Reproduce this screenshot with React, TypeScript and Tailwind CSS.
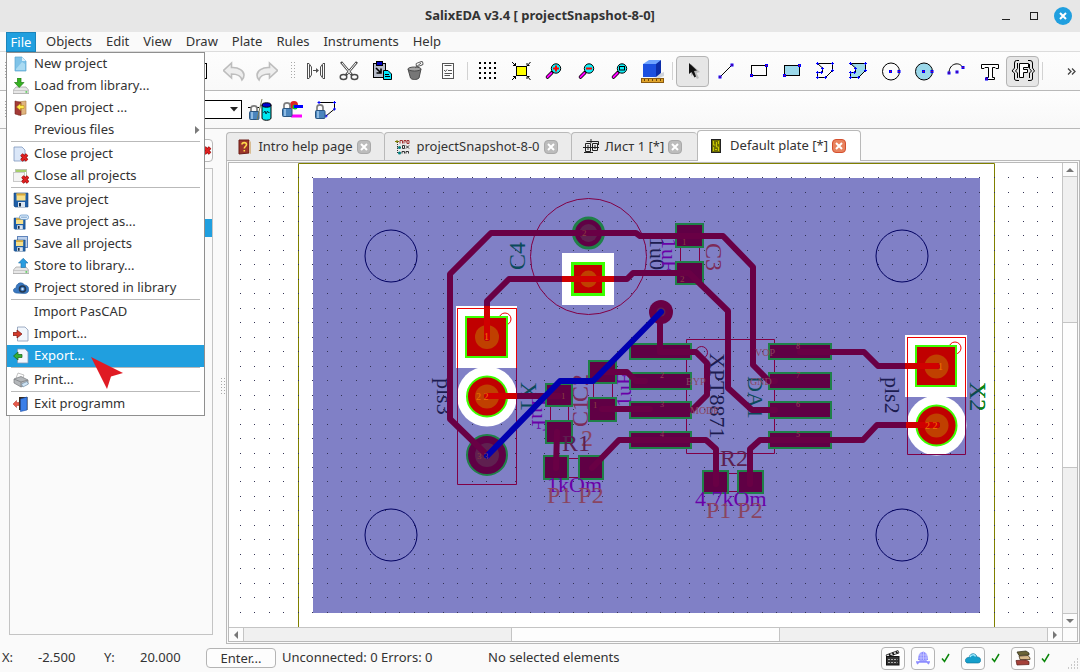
import { ReactNode } from 'react';

const MENUS = ['Objects', 'Edit', 'View', 'Draw', 'Plate', 'Rules', 'Instruments', 'Help'];

const Svg = ({ size = 16, children }: { size?: number; children?: ReactNode }) => (
  <svg width={size} height={size} viewBox={`0 0 ${size} ${size}`} className="shrink-0" aria-hidden="true">
    {children}
  </svg>
);

/* ---------- File menu icons (16 x 16) ---------- */

const RedCross = ({ x = 7, y = 7 }: { x?: number; y?: number }) => (
  <g transform={`translate(${x} ${y})`}>
    <path d="M1.5 1.5 L7 7.5 M7 1.5 L1.5 7.5" stroke="#8a0f0f" strokeWidth="3.4" />
    <path d="M1.5 1.5 L7 7.5 M7 1.5 L1.5 7.5" stroke="#e02020" strokeWidth="2.2" />
  </g>
);

const Floppy = ({ x = 1, y = 1, s = 1 }: { x?: number; y?: number; s?: number }) => (
  <g transform={`translate(${x} ${y}) scale(${s})`}>
    <path d="M0 0 H14 V14 H1 L0 13Z" fill="#1f5fa8" stroke="#174577" strokeWidth=".6" />
    <rect x="2.5" y="0.5" width="9" height="7" fill="#f7e08a" />
    <rect x="2.5" y="0.5" width="9" height="2" fill="#d9a93a" />
    <rect x="4" y="9" width="7" height="5" fill="#d9e4ef" />
    <rect x="5" y="10" width="2" height="3.5" fill="#1b2c44" />
  </g>
);

const Drive = () => (
  <>
    <path d="M3 9 L13 9 L16 12.5 V15.5 H0 V12.5Z" fill="#e7e7e7" stroke="#8d8d8d" strokeWidth=".6" />
    <path d="M0 12.5 H16" stroke="#b5b5b5" strokeWidth=".6" />
    <rect x="12.5" y="13.3" width="1.8" height="1.3" fill="#35c435" />
  </>
);

const Sheet = () => <path d="M4.5 1 H12 L15 4 V15 H4.5Z" fill="#f1f6fc" stroke="#8899b5" strokeWidth=".8" />;

const NewIcon = () => (
  <Svg>
    <path d="M2 1 H9 L13 5 V15 H2Z" fill="#7fc3e8" stroke="#5aa5cf" strokeWidth=".7" />
    <path d="M9 1 V5 H13Z" fill="#d9effa" />
    <path d="M3 13 L9 6 L12 8 V14 H3Z" fill="#a9daf2" />
  </Svg>
);
const LoadIcon = () => (
  <Svg>
    <Drive />
    <path d="M4.5 0 H8 V4.5 H11 L6.2 9.5 L1.5 4.5 H4.5Z" fill="#35b321" stroke="#1f7a12" strokeWidth=".7" />
  </Svg>
);
const OpenIcon = () => (
  <Svg>
    <path d="M5 2 L13 1 V14 L5 15Z" fill="#e0b47e" stroke="#a87a43" strokeWidth=".6" />
    <path d="M2 1 L8 2.5 V15.5 L2 14Z" fill="#a33b37" stroke="#74211f" strokeWidth=".6" />
    <path d="M3.5 7 L7.5 3.5 V5.5 H11 V8.5 H7.5 V10.5Z" fill="#ffe94a" stroke="#b08a10" strokeWidth=".5" />
  </Svg>
);
const CloseIcon = () => (
  <Svg>
    <path d="M1 1 H9 L12 4 V15 H1Z" fill="#dbe7f8" stroke="#7f97bd" strokeWidth=".8" />
    <RedCross />
  </Svg>
);
const CloseAllIcon = () => (
  <Svg>
    <rect x="2.5" y="1.5" width="11" height="9" fill="#fff" stroke="#b9c4b0" />
    <rect x=".5" y="4.5" width="11" height="9" fill="#f4f4f4" stroke="#c9c9c9" />
    <rect x="3" y="2" width="10" height="2" fill="#a7cf6a" />
    <RedCross x={8} y={7} />
  </Svg>
);
const SaveIcon = () => (
  <Svg>
    <Floppy />
  </Svg>
);
const SaveAsIcon = () => (
  <Svg>
    <Floppy x={1} y={4} s={0.8} />
    <rect x="6.5" y="1" width="9" height="4.5" rx="2" fill="#d9eafa" stroke="#5b8fc6" strokeWidth=".7" />
    <path d="M8.5 3.2 H14" stroke="#2d62a0" strokeDasharray="1 1" />
  </Svg>
);
const SaveAllIcon = () => (
  <Svg>
    <rect x="4.5" y=".5" width="10" height="11" fill="#bcd0ec" stroke="#5f84bb" />
    <Floppy x={1} y={4} s={0.8} />
  </Svg>
);
const StoreIcon = () => (
  <Svg>
    <Drive />
    <path d="M8 9.5 V5 H5.5 L10.2 .3 L15 5 H12.5 V9.5Z" fill="#2a9de0" stroke="#1b6fa8" strokeWidth=".6" />
  </Svg>
);
const CloudIcon = () => (
  <Svg>
    <path d="M3 13 C-1 12 0 8 3 8 C3 3 9 1 11.5 5 C15 5 17 9 15 12 C14 13.5 12 13.5 11 13.5Z" fill="#3a78c0" stroke="#245a99" strokeWidth=".6" />
    <circle cx="9.5" cy="9" r="3" fill="none" stroke="#24384f" strokeWidth="1.6" />
    <circle cx="9.5" cy="9" r="1.2" fill="#cfe2f5" />
  </Svg>
);
const ImportIcon = () => (
  <Svg>
    <Sheet />
    <path d="M0 6.5 H4 V4 L9 8 L4 12 V9.5 H0Z" fill="#d23a2a" stroke="#7d1710" strokeWidth=".7" />
  </Svg>
);
const ExportIcon = () => (
  <Svg>
    <Sheet />
    <path d="M9 6.5 H5 V4 L.5 8 L5 12 V9.5 H9Z" fill="#35b035" stroke="#176017" strokeWidth=".7" />
  </Svg>
);
const PrintIcon = () => (
  <Svg>
    <path d="M5 1 L11 3 L9 8 L3 6Z" fill="#fdfdfd" stroke="#9a9a9a" strokeWidth=".6" />
    <path d="M1 7 L8 4.5 L15 8 V12 L8 15 L1 11Z" fill="#b4b7ba" stroke="#75797d" strokeWidth=".7" />
    <path d="M1 7 L8 10 L15 8 M8 10 V15" fill="none" stroke="#75797d" strokeWidth=".7" />
    <path d="M8.5 12 L14 9.5 L15.5 12 L10 15Z" fill="#cfe4f5" stroke="#6e8ba3" strokeWidth=".6" />
  </Svg>
);
const ExitIcon = () => (
  <Svg>
    <path d="M6 1 H14.5 V14 H6Z" fill="#3a2a1c" />
    <path d="M7.5 3 L14 1 V14 L7.5 15.5Z" fill="#3b7fe8" stroke="#1a4aa0" strokeWidth=".6" />
    <path d="M6 6.5 H3.5 V4.5 L0 8 L3.5 11.5 V9.5 H6Z" fill="#e85a4a" stroke="#b03024" strokeWidth=".5" />
  </Svg>
);

interface MenuEntry {
  label: string;
  icon?: ReactNode;
  arrow?: boolean;
  active?: boolean;
  line?: boolean;
}

const FILE_MENU: MenuEntry[] = [
  { label: 'New project', icon: <NewIcon /> },
  { label: 'Load from library...', icon: <LoadIcon /> },
  { label: 'Open project ...', icon: <OpenIcon /> },
  { label: 'Previous files', arrow: true, line: true },
  { label: 'Close project', icon: <CloseIcon /> },
  { label: 'Close all projects', icon: <CloseAllIcon />, line: true },
  { label: 'Save project', icon: <SaveIcon /> },
  { label: 'Save project as...', icon: <SaveAsIcon /> },
  { label: 'Save all projects', icon: <SaveAllIcon /> },
  { label: 'Store to library...', icon: <StoreIcon /> },
  { label: 'Project stored in library', icon: <CloudIcon />, line: true },
  { label: 'Import PasCAD' },
  { label: 'Import...', icon: <ImportIcon /> },
  { label: 'Export...', icon: <ExportIcon />, active: true, line: true },
  { label: 'Print...', icon: <PrintIcon />, line: true },
  { label: 'Exit programm', icon: <ExitIcon /> },
];

const FileMenu = () => (
  <div role="menu" className="absolute left-0 top-5 z-20 w-[199px] border border-[#8f8f8f] bg-white">
    {FILE_MENU.map(item => (
      <div key={item.label}>
        <button
          role="menuitem"
          className={
            item.active
              ? 'flex h-[22px] w-full items-center gap-[5px] bg-[#209fdf] pl-1.5 pr-1 text-left text-white'
              : 'flex h-[22px] w-full items-center gap-[5px] pl-1.5 pr-1 text-left'
          }>
          <span className="size-4 shrink-0">{item.icon}</span>
          <span className="flex-1 whitespace-nowrap">{item.label}</span>
          {item.arrow && (
            <svg width="5" height="8" viewBox="0 0 5 8">
              <path d="M0 0 L4.5 4 L0 8Z" fill="#7a7a7a" />
            </svg>
          )}
        </button>
        {item.line && <div className="mx-1 mb-px h-px bg-[#b9b9b9]" />}
      </div>
    ))}
    {/* pointer marker */}
    <svg width="34" height="34" viewBox="0 0 34 34" className="absolute left-[84px] top-[304px]">
      <path d="M0 0 L32 16 L20 19.5 L16 32Z" fill="#e01b24" />
    </svg>
  </div>
);

/* ---------- Toolbar icons (22 x 22) ---------- */

const Node = ({ x, y }: { x: number; y: number }) => (
  <>
    <rect x={x - 1.5} y={y - 1.5} width="3" height="3" fill="#0000ff" />
    <rect x={x - 0.5} y={y - 0.5} width="1" height="1" fill="#ff0000" />
  </>
);

const Plus = ({ x, y }: { x: number; y: number }) => (
  <path d={`M${x - 1.5} ${y} h3 M${x} ${y - 1.5} v3`} stroke="#0000ff" />
);

const ARROW_BACK = 'M.5 10.5 L8.5 3 V7.5 C16 7 21 11 21 15 C21 17 20 19 19 20 C18 16 14 14 8.5 14 V18Z';

const UndoIcon = () => (
  <Svg size={22}>
    <path d={ARROW_BACK} fill="#ededed" stroke="#bdbdbd" strokeWidth="1.6" />
  </Svg>
);
const RedoIcon = () => (
  <Svg size={22}>
    <path d={ARROW_BACK} transform="translate(22 0) scale(-1 1)" fill="#ededed" stroke="#bdbdbd" strokeWidth="1.6" />
  </Svg>
);
const MirrorIcon = () => (
  <Svg size={22}>
    <path
      d="M2.5 3 V19 M2.5 3.5 H4 L6.5 7 V15 L4 18.5 H2.5 M4.5 5 V17 M19.5 3 V19 M19.5 3.5 H18 L15.5 7 V15 L18 18.5 H19.5 M17.5 5 V17"
      fill="none"
      stroke="#505050"
    />
    <path d="M8 10.5 H12" stroke="#505050" />
    <path d="M11 8 L14 10.5 L11 13Z" fill="#505050" />
  </Svg>
);
const CutIcon = () => (
  <Svg size={22}>
    <path d="M3 2 L14 15 M19 2 L8 15" stroke="#4a4a4a" strokeWidth="2.6" />
    <path d="M4 3 L13 14 M18 3 L9 14" stroke="#fff" />
    <ellipse cx="5.5" cy="17" rx="3.3" ry="2.5" fill="none" stroke="#4a4a4a" strokeWidth="1.4" />
    <ellipse cx="16.5" cy="17" rx="3.3" ry="2.5" fill="none" stroke="#4a4a4a" strokeWidth="1.4" />
  </Svg>
);
const PasteIcon = () => (
  <Svg size={22}>
    <rect x="2.5" y="3.5" width="12" height="14" fill="#b7bcc9" stroke="#000" />
    <rect x="5.5" y="1.5" width="6" height="4" fill="#0000c0" stroke="#000" />
    <path d="M5 8 L10 13 M10 8.5 V13 H5.5" fill="none" stroke="#000" strokeWidth="1.6" />
    <path d="M12.5 10.5 H17 L20.5 14 V19.5 H12.5Z" fill="#00e8ff" stroke="#000" />
    <path d="M14 14.5 H18 M14 16.5 H19" stroke="#000" />
  </Svg>
);
const BucketIcon = () => (
  <Svg size={22}>
    <path d="M4 9 H17 L15 18 C13 20 8 20 6.5 18Z" fill="#777" stroke="#4b4b4b" />
    <ellipse cx="10.5" cy="9" rx="6.5" ry="2" fill="#a4a4a4" stroke="#4b4b4b" />
    <rect x="12" y="2.5" width="7" height="3.5" rx="1.5" fill="none" stroke="#5a5a5a" transform="rotate(-20 15 4)" />
    <path d="M11 8 L17 3" stroke="#5a5a5a" />
  </Svg>
);
const ListIcon = () => (
  <Svg size={22}>
    <rect x="5.5" y="3.5" width="11" height="15" fill="#fdfdfd" stroke="#555" />
    <path d="M7.5 5.5 H14.5 M7 10 L8.5 11.5 L10 9.5 M11 10.5 H15 M7.5 13.5 H15 M7.5 15.5 H13" fill="none" stroke="#555" />
  </Svg>
);
const GridIcon = () => (
  <Svg size={22}>
    {[3, 8, 13, 18].map(y => [3, 8, 13, 18].map(x => <rect key={`${x}-${y}`} x={x - 1} y={y - 1} width="2" height="2" fill="#000" />))}
  </Svg>
);
const FitIcon = () => (
  <Svg size={22}>
    <rect x="6.5" y="6.5" width="10" height="9" fill="#ffff00" stroke="#000" />
    <path
      d="M2 2 L6 6 M20.5 2 L17 6 M2 20 L6 16 M20.5 20 L17 16 M3 5.5 H5.5 V3 M19.5 5.5 H17 V3 M3 16.5 H5.5 V19 M19.5 16.5 H17 V19"
      fill="none"
      stroke="#000"
    />
  </Svg>
);
const Lens = ({ children }: { children: ReactNode }) => (
  <Svg size={22}>
    <path d="M4.5 17 L9 12.5" stroke="#000" strokeWidth="3.6" strokeLinecap="round" />
    <path d="M4.5 17 L8.5 13" stroke="#ff00ff" strokeWidth="2" strokeLinecap="round" />
    <circle cx="13" cy="8.5" r="4.7" fill="#10f0f8" stroke="#000" />
    {children}
  </Svg>
);
const CubeIcon = () => (
  <Svg size={24}>
    <path d="M12 18 L23 13 V17 L18 19Z" fill="#cfd3da" />
    <path d="M2 5 L8 1 H20 L17 5Z" fill="#6fa4ff" />
    <path d="M2 5 H15 V18 H2Z" fill="#1c50e0" />
    <path d="M15 5 L20 1 V14 L15 18Z" fill="#0c2da8" />
    <rect x=".5" y="19.5" width="22" height="4" fill="#e0a42a" stroke="#8a5a10" />
    <path d="M3.5 20 v2 M7.5 20 v2 M11.5 20 v2 M15.5 20 v2 M19.5 20 v2" stroke="#6b4408" />
  </Svg>
);
const PointerIcon = () => (
  <Svg size={22}>
    <path d="M9 4 V16 L12 14 L15 19 L17 18 L14.5 13 L18 12Z" fill="#b9b9b9" />
    <path d="M7 3 V14 L9.5 12 L12.5 17.5 L14 16.5 L12 11 L15 10.5Z" fill="#111" />
  </Svg>
);
const LineIcon = () => (
  <Svg size={22}>
    <path d="M5 17 L17 5" stroke="#000" />
    <Node x={5} y={17} />
    <Node x={17} y={5} />
  </Svg>
);
const RectIcon = ({ fill = 'none' }: { fill?: string }) => (
  <Svg size={22}>
    <rect x="3.5" y="5.5" width="15" height="10" fill={fill} stroke="#000" />
    <Node x={3.5} y={15.5} />
    <Node x={18.5} y={5.5} />
  </Svg>
);
const PolyIcon = ({ fill = 'none' }: { fill?: string }) => (
  <Svg size={22}>
    <path d="M3.5 3.5 H18.5 V10.5 L11.5 17.5 H3.5 V12.5 H8.5 V8 L3.5 3.5Z" fill={fill} stroke="#000" />
    {[
      [3.5, 3.5],
      [18.5, 3.5],
      [18.5, 10.5],
      [11.5, 17.5],
      [3.5, 17.5],
      [3.5, 12.5],
      [7.5, 12.5],
      [8.5, 8.5],
    ].map(([x, y]) => (
      <Plus key={`${x}-${y}`} x={x} y={y} />
    ))}
  </Svg>
);
const CircleIcon = ({ fill = 'none' }: { fill?: string }) => (
  <Svg size={22}>
    <circle cx="11" cy="11.5" r="8.5" fill={fill} stroke="#000" />
    <Node x={10.5} y={11.5} />
    <Node x={19} y={11.5} />
  </Svg>
);
const ArcIcon = () => (
  <Svg size={22}>
    <path d="M3 13 C3 3 14 1 17 8" fill="none" stroke="#000" />
    <Node x={3} y={13} />
    <Node x={11} y={12} />
    <Node x={17} y={7.5} />
  </Svg>
);
const TextIcon = () => (
  <Svg size={22}>
    <path d="M2.5 4.5 H19.5 V8.5 H17 L16 7.5 H13.5 V17.5 H15.5 V19.5 H7 V17.5 H9.5 V7.5 H6 L5 8.5 H2.5Z" fill="#fff" stroke="#000" />
    <Node x={7.5} y={19} />
  </Svg>
);
const FragmentIcon = () => (
  <Svg size={24}>
    <path d="M8.5 4.5 H17.5 V8.5 H12.5 V10.5 H16.5 V13.5 H12.5 V18.5 H8.5Z" fill="#fff" stroke="#000" />
    <path d="M8 1.5 H5.5 Q3.5 1.5 3.5 4 V9 L1 12 L3.5 14 V20 Q3.5 21.5 6 21.5 H8 M6.5 4 V9.5 L4.5 12 L6.5 14 V19" fill="none" stroke="#000" />
    <path d="M17 1.5 H19 Q21.5 1.5 21.5 4 V9 L23.5 12 L21.5 14 V20 Q21.5 21.5 19 21.5 H17 M18.5 5 V9.5 L20.5 12 L18.5 14 V19" fill="none" stroke="#000" />
  </Svg>
);

const Lock = ({ x, y }: { x: number; y: number }) => (
  <g transform={`translate(${x} ${y})`}>
    <path d="M2 7 V3.5 C2 0 8 0 8 3.5 V7" fill="none" stroke="#7d7d7d" strokeWidth="1.7" />
    <rect x=".5" y="6.5" width="9.5" height="8" rx="1" fill="#4a85bd" stroke="#2a5580" />
    <rect x="2" y="7" width="2" height="7" fill="#8fbbe2" />
  </g>
);

const Grip = () => (
  <svg width="4" height="18" viewBox="0 0 4 18" className="shrink-0" aria-hidden="true">
    {[0, 3, 6, 9, 12, 15].map(y => (
      <path key={y} d={`M0 ${y + 0.5} h1 M3 ${y + 0.5} h1`} stroke="#a8a8a8" />
    ))}
  </svg>
);

const Tool = ({ label, pressed, children }: { label: string; pressed?: boolean; children: ReactNode }) => (
  <button
    aria-label={label}
    className={
      pressed
        ? 'flex h-[31px] w-[33px] shrink-0 items-center justify-center rounded-sm border border-[#b4b4b4] bg-[#e6e6e6]'
        : 'flex h-[31px] w-[33px] shrink-0 items-center justify-center'
    }>
    {children}
  </button>
);

const Divider = () => <div className="mx-[3px] h-[18px] w-px shrink-0 bg-[#d2d2d2]" />;

const Toolbars = () => (
  <>
    <div className="flex h-[39px] items-center overflow-hidden border-b border-[#b9b9b9] bg-gradient-to-b from-[#fdfdfd] to-[#f9f9f9] pl-[5px]">
      <Grip />
      <div className="w-[198px] shrink-0">
        <div className="h-4 border border-black bg-white" />
      </div>
      <div className="flex shrink-0 items-center pl-[10px]">
        <Tool label="Undo"><UndoIcon /></Tool>
        <Tool label="Redo"><RedoIcon /></Tool>
      </div>
      <div className="pl-2 pr-1"><Grip /></div>
      <Tool label="Mirror"><MirrorIcon /></Tool>
      <Tool label="Cut"><CutIcon /></Tool>
      <Tool label="Paste"><PasteIcon /></Tool>
      <Tool label="Delete"><BucketIcon /></Tool>
      <Tool label="Properties"><ListIcon /></Tool>
      <Divider />
      <Tool label="Grid"><GridIcon /></Tool>
      <Tool label="Fit"><FitIcon /></Tool>
      <Tool label="Zoom in">
        <Lens><path d="M10 8.5 H16 M13 5.5 V11.5" stroke="#f00" strokeWidth="2" /></Lens>
      </Tool>
      <Tool label="Zoom out">
        <Lens><path d="M10 8.5 H16" stroke="#f00" strokeWidth="2" /></Lens>
      </Tool>
      <Tool label="Zoom window">
        <Lens><rect x="10.5" y="6.5" width="5" height="3.5" fill="none" stroke="#000" /></Lens>
      </Tool>
      <Tool label="3D view"><CubeIcon /></Tool>
      <Divider />
      <Tool label="Select" pressed><PointerIcon /></Tool>
      <Tool label="Line"><LineIcon /></Tool>
      <Tool label="Rectangle"><RectIcon /></Tool>
      <Tool label="Filled rectangle"><RectIcon fill="#9bd8ea" /></Tool>
      <Tool label="Polygon"><PolyIcon /></Tool>
      <Tool label="Filled polygon"><PolyIcon fill="#9bd8ea" /></Tool>
      <Tool label="Circle"><CircleIcon /></Tool>
      <Tool label="Filled circle"><CircleIcon fill="#9bd8ea" /></Tool>
      <Tool label="Arc"><ArcIcon /></Tool>
      <Tool label="Text"><TextIcon /></Tool>
      <Tool label="Fragment" pressed><FragmentIcon /></Tool>
      <Divider />
      <button aria-label="More" className="ml-auto shrink-0 pr-1">
        <svg width="9" height="7" viewBox="0 0 9 7">
          <path d="M1 .5 L4 3.5 L1 6.5 M5 .5 L8 3.5 L5 6.5" fill="none" stroke="#444" strokeWidth="1.3" />
        </svg>
      </button>
    </div>
    <div className="flex h-[38px] items-center border-b border-[#b9b9b9] bg-gradient-to-b from-[#fefefe] to-[#f8f8f8] pl-[5px]">
      <Grip />
      <div className="ml-2 flex h-[19px] w-[225px] justify-end border border-black bg-white">
        <button aria-label="Layer" className="flex w-[15px] items-center justify-center">
          <svg width="8" height="5" viewBox="0 0 8 5">
            <path d="M0 0 H8 L4 4.5Z" fill="#222" />
          </svg>
        </button>
      </div>
      <div className="ml-px flex">
        <Tool label="Lock pins">
          <Svg size={24}>
            <path d="M0 9.5 H3 M8 9.5 H11" stroke="#000" />
            <Lock x={1} y={7} />
            <path d="M9 22 L14 1" stroke="#7a7a50" />
            <path d="M14 7 V20 C14 23 23 23 23 20 V7Z" fill="#00e8f0" stroke="#000" />
            <ellipse cx="18.5" cy="7" rx="4.5" ry="2.2" fill="#0000d0" stroke="#000" />
            <path d="M15.5 15 l1.5 -2 l1 3 l1.5 -3 l1 2 l1 -1" fill="none" stroke="#034" />
          </Svg>
        </Tool>
        <Tool label="Lock tracks">
          <Svg size={24}>
            <circle cx="13" cy="7" r="4" fill="#e02020" />
            <circle cx="14" cy="9" r="2.5" fill="#00d020" />
            <path d="M13 8.5 H22" stroke="#0000ff" strokeWidth="3" />
            <path d="M10 18 H21" stroke="#ff00ff" strokeWidth="3" />
            <Lock x={1} y={4} />
          </Svg>
        </Tool>
        <Tool label="Lock polygon">
          <Svg size={24}>
            <path d="M5 4.5 H20.5 V11 L12 18" fill="none" stroke="#000" />
            <Plus x={5} y={4.5} />
            <Plus x={20.5} y={4.5} />
            <Plus x={20.5} y={11} />
            <Plus x={12} y={18} />
            <Lock x={1} y={6} />
          </Svg>
        </Tool>
      </div>
    </div>
  </>
);

/* ---------- Tabs ---------- */

interface TabProps {
  label: string;
  icon: ReactNode;
  width: string;
  active?: boolean;
}

const TABS: TabProps[] = [
  {
    label: 'Intro help page',
    width: 'w-[158px]',
    icon: (
      <Svg>
        <path d="M3 1 H13 V14 L3 15Z" fill="#9c352b" stroke="#6b1c16" />
        <path d="M13 1 L15 3 V15 L13 14Z" fill="#d9bd93" />
        <path d="M6 5.5 C6 3 10.5 3 10.5 5.5 C10.5 7.5 8.3 7.5 8.3 9.5 M8.3 11 V12.5" fill="none" stroke="#ffd94a" strokeWidth="1.6" />
      </Svg>
    ),
  },
  {
    label: 'projectSnapshot-8-0',
    width: 'w-[187px]',
    icon: (
      <Svg>
        <path d="M3.5 3 V14 H7 M3.5 8.5 H7" fill="none" stroke="#333" strokeDasharray="1 1" />
        <path d="M1 2.5 H5 M3 1 V4" stroke="#7a7a00" />
        <path d="M6 4.5 V1.5 H8.5 V4.5 M10 1.5 V4.5 M10 1.5 H12 V3.5 M13 1.5 H15 V4.5 H13Z" fill="none" stroke="#a03030" />
        <circle cx="5.5" cy="8.5" r="1.5" fill="#008080" />
        <circle cx="5.5" cy="14" r="1.5" fill="#008080" />
        <path d="M8.5 6.5 H10.5 V9.5 H8.5Z M12 6.5 L15 9.5 M15 6.5 L12 9.5 M8 14.5 V12.5 H10.5 V14.5 M12 14.5 V12.5 H14.5 V14.5" fill="none" stroke="#333" />
      </Svg>
    ),
  },
  {
    label: 'Лист 1 [*]',
    width: 'w-[126px]',
    icon: (
      <Svg>
        <path d="M0 8.5 H16 M2.5 4.5 H7.5 V12.5 H2.5Z M9.5 4.5 H14.5 V11.5 H9.5Z M3.5 2.5 H15.5 V6 M8 0 V4 M1 13.5 H10 M5 6 V11 M12 6 V10" fill="none" stroke="#222" />
      </Svg>
    ),
  },
  {
    label: 'Default plate [*]',
    width: 'w-[164px]',
    active: true,
    icon: (
      <Svg>
        <rect x="3.5" y="1.5" width="9" height="13" fill="#6e6e00" stroke="#222" />
        <path d="M5.5 3 V7 H7.5 M10.5 3 V6 M8.5 4 V9 H10.5 V13 M5.5 9 V13 M7 11.5 H9" fill="none" stroke="#c8c800" />
      </Svg>
    ),
  },
];

const Tab = ({ label, icon, width, active }: TabProps) => (
  <div
    role="tab"
    aria-selected={!!active}
    className={`${width} ${
      active ? 'relative z-10 -mb-px h-[31px] border bg-white' : 'h-7 border border-r-0 bg-[#ebebeb]'
    } flex shrink-0 items-center justify-center gap-1 rounded-t-sm border-b-0 border-[#b9b9b9] pr-1`}>
    {icon}
    <span className="whitespace-nowrap pl-0.5">{label}</span>
    <button
      aria-label={`Close ${label}`}
      className={
        active
          ? 'flex size-[14px] items-center justify-center rounded-sm border border-[#d5502f] bg-[#e8835f]'
          : 'flex size-[14px] items-center justify-center rounded-sm border border-[#a9a9a9] bg-[#bcbcbc]'
      }>
      <svg width="8" height="8" viewBox="0 0 8 8">
        <path d="M1 1 L7 7 M7 1 L1 7" stroke="#fff" strokeWidth="2" />
      </svg>
    </button>
  </div>
);

/* ---------- Plate ---------- */

const PLATE = '#8080c6';
const COPPER = '#690045';
const RED = '#c00000';
const LIME = '#3cff00';
const GREEN = '#1f8048';

const gridPath = () => {
  let d = '';
  for (let i = 0; i < 57; i++) {
    for (let j = 0; j < 31; j++) {
      d += `M${Math.floor(240.3 + i * 14.5)} ${Math.floor(177.9 + j * 14.48)}h1v1h-1z`;
    }
  }
  return d;
};

// left, top, width, height of rectangular pads
const PADS = [
  [675, 223, 29, 25],
  [675, 261, 29, 24],
  [545, 383, 28, 24],
  [545, 420, 28, 24],
  [588, 360, 29, 24],
  [588, 397, 29, 25],
  [543, 455, 26, 25],
  [578, 455, 26, 25],
  [702, 470, 27, 24],
  [737, 470, 27, 24],
  [629, 343, 63, 17],
  [629, 372, 63, 18],
  [629, 401, 63, 18],
  [629, 431, 63, 18],
  [768, 343, 64, 17],
  [768, 372, 64, 18],
  [768, 401, 64, 18],
  [768, 431, 64, 18],
];

const TRACKS = [
  'M487 455 L450 419 V274 L491 233 H636 L640 236 H723 L753 267 V365 L769 381 H775',
  'M487 338 V301 L509 279 H627 L633 273 H689 L728 311 V388 L752 410 H775',
  'M487 396 H559',
  'M557 432 L556 468',
  'M592 468 L619 440 H706 L716 449 V484',
  'M750 484 V449 L760 440 H863 L877 425 H937',
  'M800 352 H864 L878 366 H937',
  'M602 372 H627 L636 381 H645',
  'M602 409 H650',
  'M660 312 V352 H696 L707 363 V395 L692 410',
];

const RoundPad = ({ x, y, hot }: { x: number; y: number; hot?: boolean }) => (
  <>
    <circle cx={x} cy={y} r="20" fill={hot ? RED : '#5f0045'} stroke={hot ? LIME : GREEN} strokeWidth="2" />
    <circle cx={x} cy={y} r="12" fill={hot ? '#c04000' : '#5f2050'} />
  </>
);

interface MarkProps {
  x: number;
  y: number;
  turn?: number;
  size?: number;
  fill: string;
  children: string;
}

const Mark = ({ x, y, turn = 0, size = 24, fill, children }: MarkProps) => (
  <text transform={`translate(${x} ${y}) rotate(${turn})`} fontSize={size} fill={fill}>
    {children}
  </text>
);

const Plate = () => (
  <svg
    viewBox="229 163 833 464"
    preserveAspectRatio="xMidYMid slice"
    className="h-full w-full bg-white font-['Liberation_Serif']">
    <defs>
      <clipPath id="hot">
        <path d="M562 253 H614 V305 H562Z M456 306 H517 V368 H456Z M905 335 H967 V397 H905Z M456 368 H517 V427 H456Z M906 397 H967 V455 H906Z" />
      </clipPath>
      <clipPath id="margin">
        <rect x="980" y="163" width="82" height="464" />
      </clipPath>
    </defs>
    <rect x="313" y="178" width="667" height="435" fill={PLATE} />
    <path d="M298.5 640 V163.5 H994.5 V640" fill="none" stroke="#808000" />
    <path d={gridPath()} fill="#333355" shapeRendering="crispEdges" />
    <g fill="none" stroke="#000060">
      <circle cx="391" cy="256" r="26" />
      <circle cx="902" cy="256" r="26" />
      <circle cx="391" cy="535" r="26" />
      <circle cx="902" cy="535" r="26" />
    </g>

    {/* clearances of the selected net */}
    <g fill="#fff">
      <rect x="562" y="253" width="52" height="52" />
      <rect x="456" y="306" width="61" height="62" />
      <rect x="905" y="335" width="62" height="62" />
      <circle cx="487" cy="396.5" r="30" />
      <circle cx="936.5" cy="425.5" r="30" />
    </g>

    {/* silk */}
    <g fill="none" stroke="#800045">
      <circle cx="588.5" cy="256.5" r="58" />
      <path d="M457.5 308.5 H516.5 V484.5 H457.5Z M907.5 337.5 H965.5 V454.5 H907.5Z M686.5 339.5 H774.5 V453.5 H686.5Z" />
      <path d="M680.5 248 V261 M699.5 248 V261 M550.5 407 V420 M568.5 407 V420 M593.5 384 V397 M612.5 384 V397 M569 458.5 H578 M569 477.5 H578 M729 473.5 H737 M729 491.5 H737" />
      <circle cx="701.5" cy="352.5" r="6" />
    </g>
    <g fill="none" stroke="#f00000">
      <path d="M457.5 368 V308.5 H516.5 V368 M907.5 397 V337.5 H965.5 V397" />
      <circle cx="505" cy="319" r="6" />
      <circle cx="955" cy="348" r="6" />
    </g>

    {/* lettering */}
    <Mark x={525} y={270} turn={-90} fill="#0b4a5a">C4</Mark>
    <Mark x={437} y={378} turn={90} size={22} fill="#1c1c50">pls3</Mark>
    <Mark x={521} y={382} turn={90} fill="#0b4a5a">X1</Mark>
    <Mark x={650} y={237} turn={90} size={22} fill="#1c1c50">1u0</Mark>
    <Mark x={662} y={238} turn={90} size={22} fill="#6a00a8">1uF</Mark>
    <Mark x={706} y={243} turn={90} fill="#7d2b58">C3</Mark>
    <Mark x={532} y={397} turn={90} size={22} fill="#6a00a8">1uF</Mark>
    <Mark x={631} y={407} turn={-90} size={22} fill="#6a00a8">1uF</Mark>
    <Mark x={588} y={402} turn={-90} fill="#7d2b58">C2</Mark>
    <Mark x={588} y={427} turn={-90} fill="#7d2b58">C1</Mark>
    <Mark x={581} y={446} fill="#8a4560">2</Mark>
    <Mark x={710} y={353} turn={90} size={22} fill="#1c1c50">XPT8871</Mark>
    <Mark x={748} y={376} turn={90} size={22} fill="#0b4a5a">DA1</Mark>
    <Mark x={885} y={377} turn={90} size={22} fill="#1c1c50">pls2</Mark>
    <Mark x={970} y={382} turn={90} fill="#0b4a4a">X2</Mark>
    {/* the designator is brighter where it leaves the plate */}
    <g clipPath="url(#margin)" aria-hidden="true">
      <Mark x={970} y={382} turn={90} fill="#0a8a10">X2</Mark>
    </g>

    {/* copper */}
    {PADS.map(([x, y, w, h]) => (
      <rect key={`${x}-${y}`} x={x + 1} y={y + 1} width={w - 2} height={h - 2} fill="#600045" stroke={GREEN} strokeWidth="2" />
    ))}
    <circle cx="588.5" cy="233" r="15" fill="#600045" stroke={GREEN} strokeWidth="3" />
    <circle cx="588.5" cy="233" r="9" fill="#5f2050" />
    <rect x="572.5" y="263.5" width="31" height="31" fill={RED} stroke={LIME} strokeWidth="3" />
    <circle cx="588.5" cy="279" r="8.5" fill="#c04000" />
    <rect x="466" y="317" width="41" height="40" fill={RED} stroke={LIME} strokeWidth="2" />
    <circle cx="487" cy="337" r="12" fill="#c04000" />
    <rect x="916" y="346" width="40" height="40" fill={RED} stroke={LIME} strokeWidth="2" />
    <circle cx="936.5" cy="366.5" r="12" fill="#c04000" />
    <RoundPad x={487} y={396.5} hot />
    <RoundPad x={487} y={455} />
    <RoundPad x={936.5} y={425.5} hot />
    <circle cx="661" cy="312" r="12" fill={COPPER} />

    <g fill="none" stroke={COPPER} strokeWidth="6" strokeLinejoin="round" strokeLinecap="round">
      {TRACKS.map(d => (
        <path key={d} d={d} />
      ))}
    </g>
    <g fill="none" stroke="#d00000" strokeWidth="6" clipPath="url(#hot)" strokeLinecap="round">
      <path d="M487 338 V301" />
      <path d="M562 279 H614" />
      <path d="M487 396 H540" />
      <path d="M890 366 H937 M890 425 H937" />
    </g>
    <circle cx="661" cy="312" r="4.5" fill="#5f2050" />
    <path d="M487 456 L560 381 H593 L661 312" fill="none" stroke="#0000b0" strokeWidth="6" strokeLinecap="round" strokeLinejoin="round" />

    <Mark x={562} y={451} fill="#5c2050">R1</Mark>
    <Mark x={547} y={492} size={22} fill="#6a00a8">1kOm</Mark>
    <Mark x={547} y={503} fill="#8a4560">P1 P2</Mark>
    <Mark x={720} y={466} fill="#5c2050">R2</Mark>
    <Mark x={695} y={506} size={22} fill="#6a00a8">4.7kOm</Mark>
    <Mark x={706} y={518} fill="#8a4560">P1 P2</Mark>

    {/* pin numbers and names */}
    <g fontSize="8" fill="#95405a">
      <text x="660" y="378">2</text>
      <text x="660" y="407">3</text>
      <text x="660" y="437">4</text>
      <text x="796" y="349">8</text>
      <text x="796" y="378">7</text>
      <text x="796" y="407">6</text>
      <text x="796" y="437">5</text>
    </g>
    <g fontSize="10" fill="#8a4560">
      <text x="755" y="356">VOP</text>
      <text x="750" y="385">GND</text>
      <text x="686" y="385">BYP</text>
      <text x="690" y="414">MODE</text>
    </g>
    <g fontSize="10" fill="#f07000">
      <text x="484" y="340">1</text>
      <text x="476" y="400">2 2</text>
      <text x="938" y="370">1</text>
      <text x="925" y="429">2 2</text>
    </g>
    <g fontSize="9" fill="#8a4040">
      <text x="477" y="459">3 3</text>
      <text x="582" y="236">2</text>
      <text x="682" y="245">1</text>
      <text x="680" y="282">2</text>
      <text x="593" y="408">1</text>
      <text x="561" y="399">1</text>
    </g>
  </svg>
);

/* ---------- Scroll bars ---------- */

const Arrow = ({ d }: { d: string }) => (
  <button aria-label="Scroll" className="flex h-[13px] w-[14px] shrink-0 items-center justify-center bg-[#fcfcfc]">
    <svg width="8" height="8" viewBox="0 0 8 8">
      <path d={d} fill="#777" />
    </svg>
  </button>
);

const Workspace = () => (
  <div className="flex min-h-0 flex-1 flex-col border border-[#b9b9b9] bg-[#fafafa] p-px">
    <div className="flex min-h-0 flex-1 flex-col border border-[#b9b9b9] bg-white">
      <div className="flex min-h-0 flex-1">
        <div className="min-h-0 min-w-0 flex-1">
          <Plate />
        </div>
        <div className="flex w-[15px] flex-col border-l border-[#c4c4c4] bg-[#f0f0f0]">
          <Arrow d="M0 6 L4 2 L8 6Z" />
          <div className="flex-1 border-t border-[#c4c4c4]" />
          <div className="flex-1 border-y border-[#c4c4c4] bg-[#fdfdfd]" />
          <div className="flex-1 border-b border-[#c4c4c4]" />
          <Arrow d="M0 2 L4 6 L8 2Z" />
        </div>
      </div>
      <div className="flex h-[14px] border-t border-[#c4c4c4] bg-[#f0f0f0]">
        <Arrow d="M6 0 L2 4 L6 8Z" />
        <div className="flex-1 border-l border-[#c4c4c4]" />
        <div className="flex-1 border-x border-[#c4c4c4] bg-[#fdfdfd]" />
        <div className="flex-1 border-r border-[#c4c4c4]" />
        <Arrow d="M2 0 L6 4 L2 8Z" />
        <div className="w-[15px] border-l border-[#c4c4c4] bg-[#fcfcfc]" />
      </div>
    </div>
  </div>
);

const Check = () => (
  <svg width="10" height="10" viewBox="0 0 10 10" aria-hidden="true">
    <path d="M1 5.5 L3.5 8.5 L8 1" fill="none" stroke="#0a860a" strokeWidth="1.5" />
  </svg>
);

const StatusButton = ({ label, children }: { label: string; children: ReactNode }) => (
  <button aria-label={label} className="flex h-[23px] w-6 items-center justify-center rounded-sm border border-[#b4b4b4] bg-[#fdfdfd]">
    {children}
  </button>
);

const StatusBar = () => (
  <footer className="flex h-7 shrink-0 items-center pl-0.5 pr-px">
    <span className="w-9">X:</span>
    <span className="w-[66px]">-2.500</span>
    <span className="w-9">Y:</span>
    <span className="w-[66px]">20.000</span>
    <button className="h-5 w-[70px] rounded-sm border border-[#b4b4b4] bg-[#fdfdfd] leading-none">Enter...</button>
    <span className="ml-1.5 w-[206px] whitespace-nowrap">Unconnected: 0 Errors: 0</span>
    <span className="whitespace-nowrap">No selected elements</span>
    <div className="ml-auto flex items-center">
      <StatusButton label="Video">
        <Svg>
          <path d="M1 5 L13 .5 L14 3 L2 7Z" fill="#e0e0e0" stroke="#222" strokeWidth=".8" />
          <path d="M4 4 L5.5 6 M7.5 2.5 L9 5 M11 1.5 L12.5 3.5" stroke="#111" strokeWidth="1.5" />
          <rect x="1.5" y="6.5" width="12.5" height="8.5" fill="#333" stroke="#111" />
          <path d="M3 9.5 H12.5 M3 12.5 H12.5" stroke="#b0b0b0" strokeDasharray="2 1" />
        </Svg>
      </StatusButton>
      <div className="ml-1.5 flex items-center">
        <StatusButton label="Server">
          <Svg>
            <path d="M3 10 C3 -1 13 -1 13 10Z" fill="#8c8cff" />
            <path d="M3.5 5 H12.5 M3 8 H13 M6 2 V11 M8.5 1 V11 M11 3 V11" stroke="#d0d0ff" strokeWidth=".7" />
            <path d="M1 12 H15 M2 14 L5 11 H11 L14 14" fill="none" stroke="#8c8cff" strokeWidth="1.5" />
          </Svg>
        </StatusButton>
        <span className="flex w-[26px] justify-center pr-1"><Check /></span>
      </div>
      <StatusButton label="Cloud">
        <Svg>
          <path d="M2 13 C-1.5 11 1 7 4 7.5 C5 2.5 11 2.5 12 7 C17 7 16.5 13 13 13Z" fill="#159fcb" stroke="#0c6f96" strokeWidth=".6" />
          <path d="M5 7 C6 4.5 9.5 4 10.5 6.5" fill="none" stroke="#a5ebff" strokeWidth="1.5" />
        </Svg>
      </StatusButton>
      <span className="flex w-[26px] justify-center pr-1"><Check /></span>
      <StatusButton label="Library">
        <Svg>
          <path d="M2 2 L11 1 L14 3 V5 L4 5.5Z" fill="#6b6437" stroke="#2c2815" strokeWidth=".7" />
          <path d="M4 6 L13 5.5 L15 8 V9.5 L5 9.5Z" fill="#d8b98a" stroke="#3a2914" strokeWidth=".7" />
          <path d="M1 10.5 L11 10 L14 11.5 V14.5 L2 15Z" fill="#a5413a" stroke="#571a15" strokeWidth=".7" />
        </Svg>
      </StatusButton>
      <span className="flex w-[26px] justify-center pr-1"><Check /></span>
      <svg width="12" height="12" viewBox="0 0 12 12" className="ml-1.5 mt-3" aria-hidden="true">
        <path d="M10 1 h1 M7 4 h1 M10 4 h1 M4 7 h1 M7 7 h1 M10 7 h1 M1 10 h1 M4 10 h1 M7 10 h1 M10 10 h1" stroke="#999" />
      </svg>
    </div>
  </footer>
);

export default function App() {
  return (
    <div className="flex h-screen w-full flex-col overflow-hidden bg-[#fafafa] font-['Noto_Sans',sans-serif] text-[13px] text-[#333]">
      <header className="relative flex h-8 shrink-0 items-center justify-center bg-[#e7e7e7]">
        <h1 className="font-bold">SalixEDA v3.4 [ projectSnapshot-8-0]</h1>
        <div className="absolute right-2 flex items-center gap-4">
          <button aria-label="Minimize" className="flex h-3 w-3 items-end">
            <span className="mb-0.5 h-px w-2 bg-[#222]" />
          </button>
          <button aria-label="Maximize" className="size-2 border border-[#222]" />
          <button aria-label="Close" className="flex size-[18px] items-center justify-center rounded-full bg-[#209fdf]">
            <svg width="8" height="8" viewBox="0 0 8 8">
              <path d="M1 1 L7 7 M7 1 L1 7" stroke="#fff" strokeWidth="2" />
            </svg>
          </button>
        </div>
      </header>

      <nav className="relative flex h-5 shrink-0 border-b border-[#dcdcdc] pl-1.5">
        <div className="relative">
          <button className="h-5 w-[30px] border border-[#1b84ba] bg-[#209fdf] leading-none text-white">File</button>
          <FileMenu />
        </div>
        <div className="ml-[10px] flex gap-[14px]">
          {MENUS.map(name => (
            <button key={name} className="h-[19px] leading-none">
              {name}
            </button>
          ))}
        </div>
      </nav>

      <Toolbars />

      <main className="flex min-h-0 flex-1">
        <aside className="flex w-[213px] shrink-0 flex-col pb-[9px] pl-[9px] pt-2.5">
          <div className="flex h-[23px] items-center justify-end rounded-sm border border-[#b9b9b9] bg-[#fdfdfd]">
            <Svg size={10}>
              <RedCross x={1} y={0} />
            </Svg>
          </div>
          <div className="mt-1.5 flex-1 border border-[#c4c4c4] pt-[50px]">
            <div className="h-[18px] bg-[#209fdf]" />
          </div>
        </aside>
        <div className="flex w-[13px] shrink-0 items-center justify-end pr-px">
          <Grip />
        </div>
        <section className="flex min-w-0 flex-1 flex-col">
          <div className="flex h-[31px] items-end" role="tablist">
            {TABS.map(tab => (
              <Tab key={tab.label} {...tab} />
            ))}
          </div>
          <Workspace />
        </section>
      </main>

      <StatusBar />
    </div>
  );
}
